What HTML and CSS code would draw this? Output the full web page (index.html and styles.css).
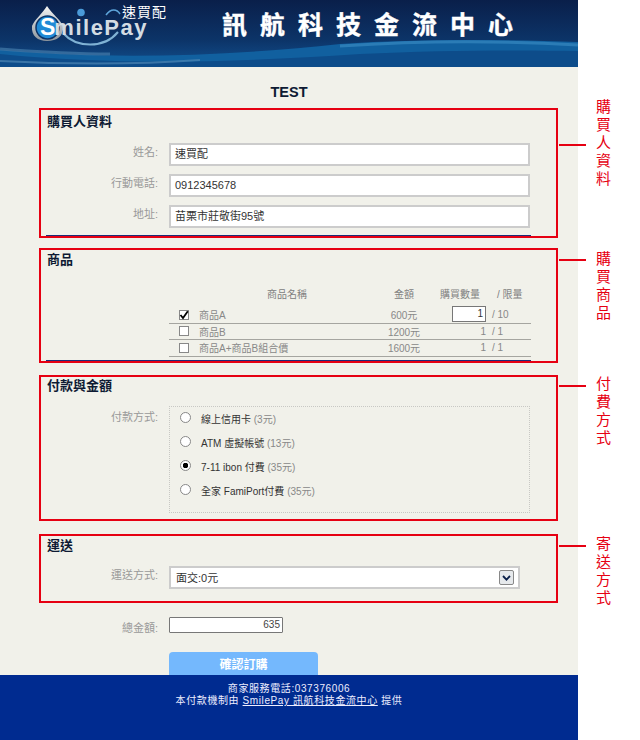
FILE: index.html
```html
<!DOCTYPE html>
<html lang="zh-Hant">
  <head>
    <meta charset="UTF-8" />
    <title>SmilePay 訊航科技金流中心</title>
    <link rel="stylesheet" href="styles.css">
  </head>
  <body>
    <div class="page">
      <header class="banner">
        <svg class="banner__art" width="578" height="67" viewBox="0 0 578 67">
          <defs>
            <linearGradient id="sky" x1="0" y1="0" x2="0" y2="1">
              <stop offset="0" stop-color="#0a1f4a" />
              <stop offset="0.6" stop-color="#0c3468" />
              <stop offset="1" stop-color="#12508f" />
            </linearGradient>
            <linearGradient id="ring" x1="0" y1="0" x2="0" y2="1">
              <stop offset="0" stop-color="#f4f4f4" />
              <stop offset="1" stop-color="#8d959c" />
            </linearGradient>
          </defs>
          <rect width="578" height="67" fill="url(#sky)" />
          <path d="M0 50C110 60 230 56 340 44C430 38 510 40 578 42V67H0Z" fill="#11609f" />
          <path d="M0 54C120 66 240 62 360 54C440 50 520 50 578 51V67H0Z" fill="#0d4c8a" />
          <path d="M0 49C40 52 70 54 110 54" stroke="#4d86b3" stroke-width="3" fill="none" opacity="0.6" />
          <path d="M0 61C60 64 130 65 200 60" stroke="#4d86b3" stroke-width="2" fill="none" opacity="0.7" />
          <path d="M340 46C430 40 510 41 578 45" stroke="#3d8fc6" stroke-width="3" fill="none" opacity="0.6" />
          <path d="M32 26C35 19 42 14 47 6C52 14 60 19 63 26C64 36 57 41 47 41C38 41 31 36 32 26Z" fill="url(#ring)" />
          <circle cx="47.5" cy="27.5" r="11.5" fill="#1f8ad6" stroke="#0c3468" stroke-width="1.5" />
          <circle cx="81" cy="12.5" r="3.8" fill="#4a9ad8" />
          <path d="M63 33C76 48 104 49 118 32" stroke="#7fb2d4" stroke-width="2" fill="none" />
          <path d="M106 15C111 8 117 9 120 14" stroke="#5ea5da" stroke-width="1.5" fill="none" />
        </svg>
        <span class="banner__logo"><span class="banner__s">S</span>milePay</span>
        <span class="banner__brand">速買配</span>
        <h1 class="banner__title">訊航科技金流中心</h1>
      </header>

      <main class="content">
        <h2 class="shop-name">TEST</h2>

        <section class="panel panel--buyer">
          <h3 class="panel__title">購買人資料</h3>
          <div class="field">
            <label class="field__label">姓名:</label>
            <div class="text-box">速買配</div>
          </div>
          <div class="field">
            <label class="field__label">行動電話:</label>
            <div class="text-box">0912345678</div>
          </div>
          <div class="field">
            <label class="field__label">地址:</label>
            <div class="text-box">苗栗市莊敬街95號</div>
          </div>
          <div class="note note--buyer">購買人資料</div>
        </section>

        <section class="panel panel--items">
          <h3 class="panel__title">商品</h3>
          <div class="goods">
            <div class="goods__head">
              <span class="goods__name">商品名稱</span>
              <span class="goods__price">金額</span>
              <span class="goods__qty">購買數量</span>
              <span class="goods__limit">/ 限量</span>
            </div>
            <div class="goods__row">
              <span class="check">
                <svg width="10" height="10" viewBox="0 0 10 10"><path d="M1.5 5L4 8L8.8 1.2" stroke="#000" stroke-width="1.8" fill="none" /></svg>
              </span>
              <span class="goods__item">商品A</span>
              <span class="goods__cost">600元</span>
              <span class="goods__count"><span class="qty-box">1</span></span>
              <span class="goods__max">/ 10</span>
            </div>
            <div class="goods__row">
              <span class="check"></span>
              <span class="goods__item">商品B</span>
              <span class="goods__cost">1200元</span>
              <span class="goods__count">1</span>
              <span class="goods__max">/ 1</span>
            </div>
            <div class="goods__row">
              <span class="check"></span>
              <span class="goods__item">商品A+商品B組合價</span>
              <span class="goods__cost">1600元</span>
              <span class="goods__count">1</span>
              <span class="goods__max">/ 1</span>
            </div>
          </div>
          <div class="note note--items">購買商品</div>
        </section>

        <section class="panel panel--pay">
          <h3 class="panel__title">付款與金額</h3>
          <div class="field field--top">
            <label class="field__label">付款方式:</label>
            <div class="pay-box">
              <div class="pay-opt"><span class="radio"></span>線上信用卡 <em>(3元)</em></div>
              <div class="pay-opt"><span class="radio"></span>ATM 虛擬帳號 <em>(13元)</em></div>
              <div class="pay-opt"><span class="radio radio--on"></span>7-11 ibon 付費 <em>(35元)</em></div>
              <div class="pay-opt"><span class="radio"></span>全家 FamiPort付費 <em>(35元)</em></div>
            </div>
          </div>
          <div class="note note--pay">付費方式</div>
        </section>

        <section class="panel panel--ship">
          <h3 class="panel__title">運送</h3>
          <div class="field">
            <label class="field__label">運送方式:</label>
            <div class="select-box">
              <span class="select-box__value">面交:0元</span>
              <span class="select-box__btn">
                <svg width="9" height="6" viewBox="0 0 9 6"><path d="M1 1L4.5 4.6L8 1" stroke="#0a1f4a" stroke-width="1.8" fill="none" /></svg>
              </span>
            </div>
          </div>
          <div class="note note--ship">寄送方式</div>
        </section>

        <div class="total">
          <label class="field__label total__label">總金額:</label>
          <div class="total__box">635</div>
        </div>

        <div class="actions">
          <button class="btn-confirm">確認訂購</button>
        </div>
      </main>

      <footer class="footer">
        <p>商家服務電話:037376006</p>
        <p>本付款機制由 <a href="#">SmilePay 訊航科技金流中心</a> 提供</p>
      </footer>
    </div>
  </body>
</html>
```

FILE: styles.css
```css
* {
  margin: 0;
  padding: 0;
  box-sizing: border-box;
}

body {
  font-family: "Liberation Sans", "Noto Sans CJK TC", sans-serif;
  background-color: #fff;
  color: #333;
  font-size: 12px;
}

.page {
  width: 578px;
  height: 740px;
  display: flex;
  flex-flow: column;
  background-color: #f1f1ea;
}

/* banner */
.banner {
  position: relative;
  height: 67px;
  flex: none;
  overflow: hidden;
}

.banner__art {
  display: block;
}

.banner__logo {
  position: absolute;
  left: 40px;
  top: 21px;
  font-size: 22px;
  line-height: 12px;
  font-weight: 700;
  letter-spacing: 1.5px;
  color: #d3dce3;
}

.banner__s {
  font-size: 23px;
  letter-spacing: -1px;
  color: #fff;
}

.banner__brand {
  position: absolute;
  left: 122px;
  top: 4px;
  font-size: 14px;
  line-height: 16px;
  letter-spacing: 1px;
  color: #fff;
}

.banner__title {
  position: absolute;
  left: 222px;
  top: 10px;
  font-size: 25px;
  line-height: 30px;
  font-weight: 700;
  letter-spacing: 13px;
  white-space: nowrap;
  color: #fff;
  -webkit-text-stroke: 0.4px #fff;
}

/* form */
.content {
  flex: 1;
  padding: 16px 20px 0 39px;
}

.shop-name {
  width: 500px;
  font-size: 14.5px;
  line-height: 18px;
  text-align: center;
  color: #0d1a33;
}

.panel {
  position: relative;
  width: 519px;
  border: 2px solid #e60012;
  padding: 2px 6px 0;
}

.panel--buyer {
  height: 130px;
  margin-top: 7px;
  padding-top: 4px;
}

.panel--items {
  height: 115px;
  margin-top: 10px;
}

.panel--pay {
  height: 146px;
  margin-top: 12px;
  padding-top: 1px;
}

.panel--ship {
  height: 69px;
  margin-top: 13px;
}

.panel--buyer::after,
.panel--items::after {
  content: "";
  position: absolute;
  left: 5px;
  width: 485px;
  bottom: 0;
  height: 1px;
  background-color: #1d2c78;
}

.panel__title {
  font-size: 13px;
  line-height: 16px;
  font-weight: 700;
  color: #0d1a33;
}

.note {
  position: absolute;
  left: 555px;
  width: 16px;
  font-size: 15px;
  line-height: 18px;
  color: #e60012;
}

.note::before {
  content: "";
  position: absolute;
  left: -37px;
  top: 10px;
  width: 27px;
  height: 2px;
  background-color: #e60012;
}

.note--buyer {
  top: -12px;
}

.note--buyer::before {
  top: 46px;
}

.note--items {
  top: 0;
}

.note--items::before {
  top: 9px;
}

.note--pay {
  top: -2px;
}

.note--ship {
  top: -1px;
}

.field {
  display: flex;
  align-items: center;
  margin-top: 8px;
}

.panel__title + .field {
  margin-top: 12px;
}

.panel--buyer .panel__title + .field {
  margin-top: 13px;
}

.field--top {
  align-items: flex-start;
}

.field__label {
  width: 111px;
  flex: none;
  margin-right: 11px;
  padding-bottom: 5px;
  text-align: right;
  font-size: 11px;
  line-height: 16px;
  color: #999;
}

.field--top .field__label {
  margin-top: 3px;
}

.text-box {
  width: 361px;
  height: 23px;
  border: 2px solid #ccc;
  background-color: #fff;
  padding-left: 4px;
  font-size: 11px;
  line-height: 19px;
  color: #333;
}

/* goods table */
.goods {
  margin: 18px 0 0 122px;
  width: 362px;
  font-size: 10px;
  color: #888;
}

.goods__head,
.goods__row {
  display: flex;
  align-items: center;
}

.goods__head {
  height: 14px;
  color: #808080;
}

.goods__name {
  width: 200px;
  text-align: center;
  padding-left: 36px;
}

.goods__price {
  width: 70px;
  text-align: center;
}

.goods__qty {
  width: 42px;
  text-align: center;
  white-space: nowrap;
}

.goods__limit {
  padding-left: 16px;
}

.goods__row {
  height: 16.5px;
  border-bottom: 1px solid #a5a5a0;
}

.goods__head + .goods__row {
  margin-top: 7px;
}

.check {
  width: 10px;
  height: 10px;
  margin: 0 10px;
  flex: none;
  border: 1px solid #888;
  background-color: #fff;
}

.check svg {
  display: block;
  margin: -1px;
}

.goods__item {
  width: 175px;
}

.goods__cost {
  width: 60px;
  text-align: center;
}

.goods__count {
  width: 52px;
  text-align: right;
}

.goods__max {
  margin-left: 6px;
}

.qty-box {
  display: block;
  margin: 0 0 2px 18px;
  height: 16px;
  border: 1px solid #777;
  background-color: #fff;
  text-align: right;
  padding-right: 2px;
  line-height: 14px;
  color: #333;
}

/* payment */
.pay-box {
  display: flex;
  flex-flow: column;
  gap: 2px;
  width: 361px;
  height: 107px;
  border: 1px dotted #c8c8c4;
}

.pay-opt {
  display: flex;
  align-items: center;
  height: 22px;
  font-size: 10px;
  white-space: pre;
  color: #333;
}

.pay-opt em {
  font-style: normal;
  color: #888;
}

.radio {
  width: 11px;
  height: 11px;
  margin: 0 10px 2px 10px;
  border: 1px solid #888;
  border-radius: 50%;
  background-color: #fff;
}

.radio--on {
  background: radial-gradient(circle, #000 0 2.5px, #fff 3px);
}

/* shipping */
.select-box {
  display: flex;
  align-items: center;
  justify-content: space-between;
  width: 351px;
  height: 23px;
  border: 2px solid #ccc;
  background-color: #fff;
  padding: 0 4px 0 5px;
  font-size: 11px;
}

.select-box__value {
  margin-bottom: 2px;
}

.select-box__btn {
  display: flex;
  align-items: center;
  justify-content: center;
  width: 15px;
  height: 15px;
  border: 1px solid #888;
  border-radius: 2px;
  background-color: #e6e9ec;
}

/* total */
.total {
  display: flex;
  align-items: flex-start;
  margin-top: 14px;
  padding-left: 8px;
}

.total__label {
  margin-top: 3px;
  padding-bottom: 0;
}

.total__box {
  width: 114px;
  height: 16px;
  border: 1px solid #777;
  border-radius: 1px;
  background-color: #fff;
  text-align: right;
  padding-right: 2px;
  font-size: 10px;
  line-height: 14px;
  color: #444;
}

.actions {
  margin-top: 16px;
  padding-left: 130px;
}

.btn-confirm {
  display: block;
  border: none;
  width: 149px;
  height: 23px;
  border-radius: 4px 4px 0 0;
  background-color: #74b8fd;
  color: #fff;
  font-family: "Noto Sans CJK TC", sans-serif;
  font-weight: 700;
  font-size: 12px;
}

/* footer */
.footer {
  flex: none;
  height: 65px;
  padding-top: 8px;
  background-color: #002b90;
  color: #eef;
  text-align: center;
  font-size: 10px;
  line-height: 12px;
  letter-spacing: 0.6px;
}

.footer a {
  color: #eef;
}
```
